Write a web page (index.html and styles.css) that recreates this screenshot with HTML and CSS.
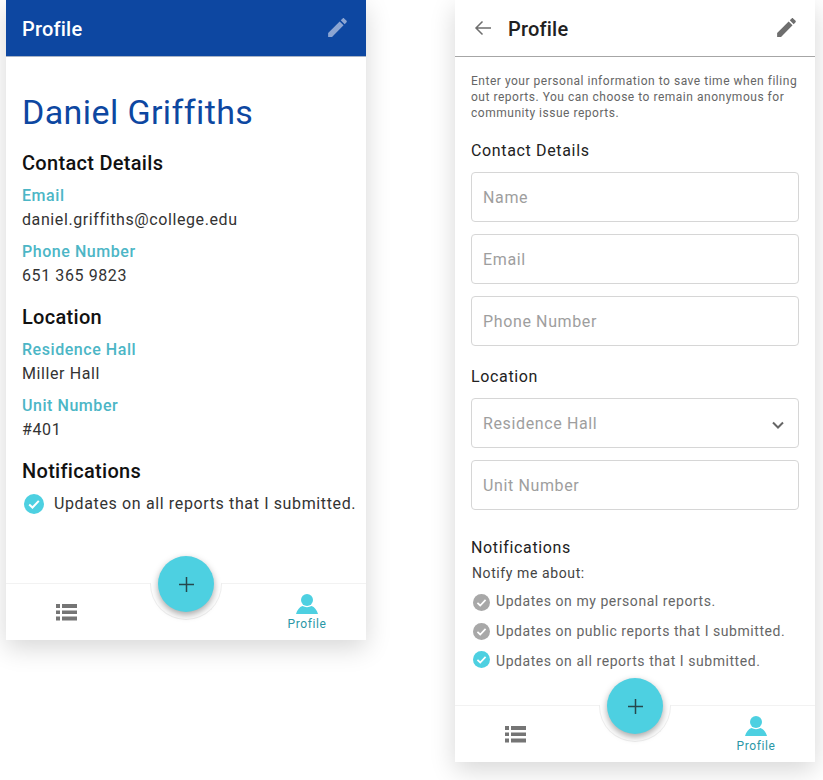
FILE: index.html
```html
<!DOCTYPE html>
<html lang="en">
<head>
    <meta charset="UTF-8">
    <meta name="viewport" content="width=device-width, initial-scale=1.0">
    <title>Profile</title>
    <link rel="stylesheet" href="styles.css">
</head>
<body>
    <svg class="sprites" width="0" height="0">
        <symbol id="pencil" viewBox="0 0 24 24"><path d="M3 17.25V21h3.75L17.81 9.94l-3.75-3.75L3 17.25zM20.71 7.04c.39-.39.39-1.02 0-1.41l-2.34-2.34c-.39-.39-1.02-.39-1.41 0l-1.83 1.83 3.75 3.75 1.83-1.83z"/></symbol>
        <symbol id="check" viewBox="0 0 20 20"><circle cx="10" cy="10" r="10"/><path d="M5.2 10.4l3.3 3.1 6.3-6.6" fill="none" stroke="#fff" stroke-width="2"/></symbol>
        <symbol id="list" viewBox="0 0 21 18"><path d="M0 1h4v4H0zM6 1h15v4H6zM0 7.500h4v3.500H0zM6 7.500h15v3.500H6zM0 13.500h4v4H0zM6 13.500h15v4H6z"/></symbol>
        <symbol id="person" viewBox="0 0 22 20"><circle cx="11" cy="6" r="6"/><path d="M0 20c1-4 3.500-7 6.500-8 2.500 1.500 6.500 1.500 9 0 3 1 5.500 4 6.500 8z"/></symbol>
        <symbol id="plus" viewBox="0 0 16 16"><path d="M8 0v16M0 8h16" fill="none" stroke="currentColor" stroke-width="1.600"/></symbol>
    </svg>

    <!-- view mode -->
    <div class="phone phone-view">
        <div class="appbar appbar-blue">
            <span class="appbar-title">Profile</span>
            <svg class="icon-edit"><use href="#pencil"/></svg>
        </div>
        <div class="content">
            <h1 class="person-name">Daniel Griffiths</h1>
            <h2 class="section-title">Contact Details</h2>
            <div class="item-label">Email</div>
            <div class="item-value">daniel.griffiths@college.edu</div>
            <div class="item-label">Phone Number</div>
            <div class="item-value">651 365 9823</div>
            <h2 class="section-title">Location</h2>
            <div class="item-label">Residence Hall</div>
            <div class="item-value">Miller Hall</div>
            <div class="item-label">Unit Number</div>
            <div class="item-value">#401</div>
            <h2 class="section-title">Notifications</h2>
            <div class="notif-row">
                <svg class="check check-on"><use href="#check"/></svg>
                <span>Updates on all reports that I submitted.</span>
            </div>
        </div>
        <div class="bottomnav">
            <div class="nav-item">
                <svg class="icon-list"><use href="#list"/></svg>
            </div>
            <div class="nav-item nav-active">
                <svg class="icon-person"><use href="#person"/></svg>
                <span>Profile</span>
            </div>
        </div>
        <div class="fab-ring"></div>
        <div class="fab"><svg class="icon-plus"><use href="#plus"/></svg></div>
    </div>

    <!-- edit mode -->
    <div class="phone phone-edit">
        <div class="appbar appbar-white">
            <svg class="icon-back" viewBox="0 0 18 16"><path d="M17 8H2M8.500 1.500L2 8l6.500 6.500" fill="none" stroke="currentColor" stroke-width="1.500"/></svg>
            <span class="appbar-title">Profile</span>
            <svg class="icon-edit"><use href="#pencil"/></svg>
        </div>
        <div class="form">
            <p class="intro">Enter your personal information to save time when filing out reports. You can choose to remain anonymous for community issue reports.</p>
            <h2 class="form-title">Contact Details</h2>
            <div class="fields">
                <div class="field">Name</div>
                <div class="field">Email</div>
                <div class="field">Phone Number</div>
            </div>
            <h2 class="form-title">Location</h2>
            <div class="fields">
                <div class="field field-select">
                    Residence Hall
                    <svg class="icon-chevron" viewBox="0 0 12 8"><path d="M1 1.500l5 5 5-5" fill="none" stroke="currentColor" stroke-width="2"/></svg>
                </div>
                <div class="field">Unit Number</div>
            </div>
            <h2 class="form-title form-title-notif">Notifications</h2>
            <div class="notify-label">Notify me about:</div>
            <div class="option"><svg class="check-small check-off check-low"><use href="#check"/></svg>Updates on my personal reports.</div>
            <div class="option"><svg class="check-small check-off"><use href="#check"/></svg>Updates on public reports that I submitted.</div>
            <div class="option"><svg class="check-small check-on check-high"><use href="#check"/></svg>Updates on all reports that I submitted.</div>
        </div>
        <div class="bottomnav">
            <div class="nav-item">
                <svg class="icon-list"><use href="#list"/></svg>
            </div>
            <div class="nav-item nav-active">
                <svg class="icon-person"><use href="#person"/></svg>
                <span>Profile</span>
            </div>
        </div>
        <div class="fab-ring"></div>
        <div class="fab"><svg class="icon-plus"><use href="#plus"/></svg></div>
    </div>
</body>
</html>
```

FILE: styles.css
```css
* {
    box-sizing: border-box;
}

body {
    margin: 0;
    padding-left: 6px;
    display: flex;
    align-items: flex-start;
    gap: 89px;
    height: 780px;
    overflow: hidden;
    background-color: white;
    font-family: Roboto, "Liberation Sans", sans-serif;
}

.sprites {
    position: absolute;
}

.phone {
    position: relative;
    width: 360px;
    display: flex;
    flex-direction: column;
    background-color: white;
    box-shadow: 0 8px 24px rgba(0, 0, 0, 0.16);
}

.phone-view {
    height: 640px;
}

.phone-edit {
    height: 762px;
}

/* app bars */
.appbar {
    height: 57px;
    display: flex;
    align-items: center;
    padding: 0 16px;
    flex-shrink: 0;
}

.appbar-blue {
    background-color: #0d47a1;
    color: white;
    border-bottom: 1px solid #a9b4c6;
}

.appbar-blue .appbar-title {
    font-size: 20px;
    font-weight: 500;
    letter-spacing: 0.2px;
}

.appbar-blue .icon-edit {
    fill: #8ba5d2;
}

.appbar-white {
    border-bottom: 1px solid #a6a6a6;
    color: #212121;
}

.appbar-white .appbar-title {
    font-size: 20px;
    font-weight: 500;
    letter-spacing: 0.2px;
    margin-left: 16px;
}

.appbar-white .icon-edit {
    fill: #6e6e6e;
}

.appbar-title {
    margin-left: 0;
    padding-top: 1px;
}

.icon-edit {
    width: 25px;
    height: 25px;
    margin-left: auto;
    margin-bottom: 1px;
}

.icon-back {
    width: 18px;
    height: 16px;
    margin-left: 3px;
    color: #6e6e6e;
}

/* view mode */
.content {
    flex: 1;
    padding: 0 16px;
}

.person-name {
    margin: 35px 0 0;
    font-size: 34px;
    line-height: 40px;
    font-weight: 400;
    letter-spacing: 0.4px;
    color: #0d47a1;
}

.section-title {
    margin: 17px 0 9px;
    font-size: 20px;
    line-height: 24px;
    font-weight: 500;
    letter-spacing: 0.3px;
    color: #111;
}

.person-name + .section-title {
    margin-top: 19px;
}

.item-label {
    font-size: 16px;
    line-height: 24px;
    font-weight: 500;
    letter-spacing: 0.55px;
    color: #4cb6c6;
}

.item-value {
    font-size: 16px;
    line-height: 24px;
    letter-spacing: 0.6px;
    color: #333;
    margin-bottom: 8px;
}

.notif-row {
    display: flex;
    align-items: center;
    margin-left: 2px;
    font-size: 16px;
    line-height: 24px;
    letter-spacing: 0.63px;
    color: #333;
    white-space: nowrap;
}

.check {
    width: 20px;
    height: 20px;
    margin-right: 10px;
    flex-shrink: 0;
}

.check-on {
    fill: #4dd0e1;
}

.check-off {
    fill: #a8a8a8;
}

/* edit mode */
.form {
    flex: 1;
    padding: 0 16px;
}

.intro {
    margin: 16px 0 0;
    font-size: 12px;
    line-height: 16px;
    letter-spacing: 0.52px;
    color: #666;
}

.form-title {
    margin: 18px 0 9px;
    font-size: 16px;
    line-height: 24px;
    font-weight: 400;
    letter-spacing: 0.65px;
    color: #222;
}

.form-title-notif {
    margin-bottom: 3px;
}

.fields {
    display: flex;
    flex-direction: column;
    gap: 12px;
}

.fields + .form-title {
    margin-top: 19px;
}

.fields + .form-title-notif {
    margin-top: 26px;
}

.field {
    height: 50px;
    display: flex;
    align-items: center;
    justify-content: space-between;
    padding: 0 14px 0 11px;
    border: 1px solid #d6d6d6;
    border-radius: 4px;
    font-size: 16px;
    letter-spacing: 0.63px;
    color: #9e9e9e;
}

.icon-chevron {
    width: 12px;
    height: 8px;
    color: #666;
    margin-top: 3px;
}

.notify-label {
    margin-left: 1px;
    font-size: 14px;
    line-height: 20px;
    letter-spacing: 0.6px;
    color: #444;
    margin-bottom: 3px;
}

.option {
    height: 30px;
    display: flex;
    align-items: center;
    margin-left: 2px;
    font-size: 14px;
    letter-spacing: 0.55px;
    color: #666;
    white-space: nowrap;
}

.check-small {
    width: 17px;
    height: 17px;
    margin-right: 6px;
    flex-shrink: 0;
}

.check-low {
    margin-top: 3px;
}

.check-high {
    margin-bottom: 3px;
}

/* bottom nav */
.bottomnav {
    height: 57px;
    flex-shrink: 0;
    display: grid;
    grid-template-columns: 120px 120px 120px;
    border-top: 1px solid #f2f2f2;
    background-color: white;
}

.nav-item {
    display: flex;
    flex-direction: column;
    align-items: center;
}

.nav-active {
    grid-column: 3;
    padding-left: 2px;
}

.nav-item span {
    font-size: 12px;
    line-height: 14px;
    letter-spacing: 0.6px;
    color: #2a97a6;
}

.icon-list {
    width: 21px;
    height: 18px;
    margin-top: 19px;
    fill: #757575;
}

.icon-person {
    width: 22px;
    height: 20px;
    margin-top: 10px;
    margin-bottom: 3px;
    fill: #4dd0e1;
}

.fab {
    position: absolute;
    left: 152px;
    bottom: 28px;
    width: 56px;
    height: 56px;
    border-radius: 50%;
    background-color: #4dd0e1;
    box-shadow: 0 3px 7px rgba(0, 0, 0, 0.35);
    display: flex;
    align-items: center;
    justify-content: center;
}

.fab-ring {
    position: absolute;
    left: 144px;
    bottom: 20px;
    width: 72px;
    height: 37px;
    border-radius: 0 0 36px 36px;
    border: 1px solid #efefef;
    border-top: none;
    background-color: white;
}

.icon-plus {
    width: 15px;
    height: 15px;
    color: #26474d;
}
```
